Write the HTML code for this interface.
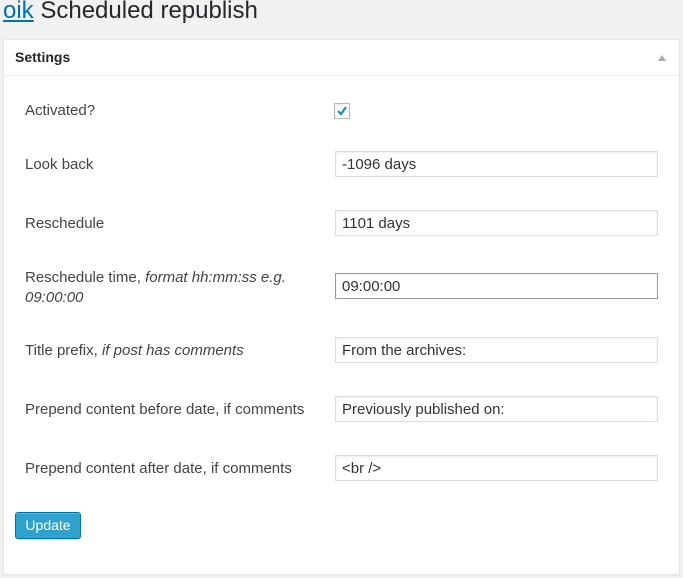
<!DOCTYPE html>
<html><head><meta charset="utf-8"><style>
*{box-sizing:border-box;margin:0;padding:0}
body{width:683px;height:578px;background:#f1f1f1;font-family:"Liberation Sans",sans-serif;color:#444;position:relative;overflow:hidden}
h1{position:absolute;left:3px;top:-3px;font-size:24px;font-weight:normal;color:#23282d;white-space:nowrap}
h1 a{color:#0073aa;text-decoration:underline}
.panel{position:absolute;left:3px;top:39px;width:677px;height:536px;background:#fff;border:1px solid #e5e5e5;box-shadow:0 1px 1px rgba(0,0,0,.04)}
.hd{height:36px;border-bottom:1px solid #eee;padding:9px 0 0 11px;font-size:14px;font-weight:bold;color:#23282d}
.arrow{position:absolute;right:13px;top:15px;width:0;height:0;border-left:4px solid transparent;border-right:4px solid transparent;border-bottom:6px solid #aaa}
.lbl{position:absolute;left:25px;font-size:15px;color:#444;line-height:20px;white-space:nowrap}
.inp{position:absolute;left:335px;width:323px;height:26px;border:1px solid #ddd;box-shadow:inset 0 1px 2px rgba(0,0,0,.07);font-size:15px;color:#333;padding:4px 0 0 6px;background:#fff}
.cb{position:absolute;left:334px;top:103px;width:16px;height:16px;border:1px solid #b4b9be;box-shadow:inset 0 1px 2px rgba(0,0,0,.1);background:#fff}
.btn{position:absolute;left:15px;top:512px;width:66px;height:27px;background:#2ea2cc;border:1px solid #0074a2;border-radius:3px;color:#fff;font-size:14px;text-align:center;line-height:25px;box-shadow:inset 0 1px 0 rgba(120,200,230,.5),0 1px 0 rgba(0,0,0,.15)}
</style></head><body>
<h1><a>oik</a> Scheduled republish</h1>
<div class="panel"><div class="hd">Settings</div><div class="arrow"></div></div>
<div class="lbl" style="top:101px">Activated?</div>
<div class="cb"><svg width="14" height="14" viewBox="0 0 14 14" style="position:absolute;left:0;top:0"><path d="M3 7 L6 10 L11 3" stroke="#1e8cbe" stroke-width="2.2" fill="none"/></svg></div>
<div class="lbl" style="top:155px">Look back</div>
<div class="inp" style="top:151px">-1096 days</div>
<div class="lbl" style="top:214px">Reschedule</div>
<div class="inp" style="top:210px">1101 days</div>
<div class="lbl" style="top:268px">Reschedule time, <i>format hh:mm:ss e.g.</i><br><i>09:00:00</i></div>
<div class="inp" style="top:273px;border-color:#999">09:00:00</div>
<div class="lbl" style="top:341px">Title prefix, <i>if post has comments</i></div>
<div class="inp" style="top:337px">From the archives:</div>
<div class="lbl" style="top:400px">Prepend content before date, if comments</div>
<div class="inp" style="top:396px">Previously published on:</div>
<div class="lbl" style="top:459px">Prepend content after date, if comments</div>
<div class="inp" style="top:455px">&lt;br /&gt;</div>
<div class="btn">Update</div>
</body></html>
